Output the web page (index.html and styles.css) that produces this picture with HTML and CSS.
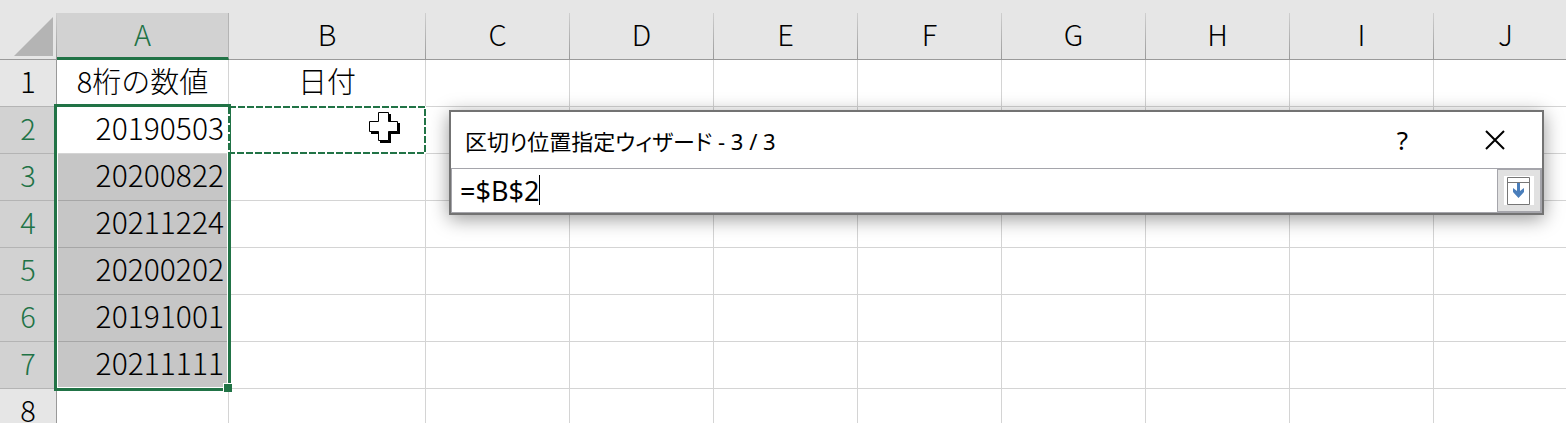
FILE: index.html
```html
<!DOCTYPE html>
<html lang="ja">
<head>
    <meta charset="UTF-8">
    <meta name="viewport" content="width=device-width, initial-scale=1.0">
    <title>区切り位置指定ウィザード</title>
    <link rel="stylesheet" href="styles.css">
</head>
<body>
    <div class="sheet">
        <table class="grid">
            <thead>
                <tr>
                    <th class="corner">
                        <svg class="corner-mark" width="39" height="39" viewBox="0 0 39 39"><path d="M39 0V39H0z" fill="#b4b4b4"/></svg>
                    </th>
                    <th class="col-a active" scope="col">A</th>
                    <th class="col-b" scope="col">B</th>
                    <th scope="col">C</th>
                    <th scope="col">D</th>
                    <th scope="col">E</th>
                    <th scope="col">F</th>
                    <th scope="col">G</th>
                    <th scope="col">H</th>
                    <th scope="col">I</th>
                    <th scope="col">J</th>
                </tr>
            </thead>
            <tbody>
                <tr>
                    <th scope="row">1</th>
                    <td class="center">8桁の数値</td>
                    <td class="center">日付</td>
                    <td></td><td></td><td></td><td></td><td></td><td></td><td></td><td></td>
                </tr>
                <tr>
                    <th class="active" scope="row">2</th>
                    <td class="num anchor">20190503
                        <div class="selection"><span class="handle"></span></div>
                    </td>
                    <td class="anchor">
                        <svg class="ants" width="198" height="48" viewBox="0 0 198 48" fill="none" stroke-width="2">
                            <path d="M1 1H197V47H1z" stroke="#fff"/>
                            <path d="M1 1H197V47H1z" stroke="#217346" stroke-dasharray="7 2"/>
                        </svg>
                        <svg class="cursor" width="32" height="32" viewBox="0 0 32 32">
                            <path d="M11 2h11v9h9v11h-9v9H11v-9H2V11h9z" fill="#000"/>
                            <path d="M9.500.5h10v9h9v10h-9v9h-10v-9h-9v-10h9z" fill="#fff" stroke="#000"/>
                        </svg>
                    </td>
                    <td></td><td></td><td></td><td></td><td></td><td></td><td></td><td></td>
                </tr>
                <tr>
                    <th class="active" scope="row">3</th>
                    <td class="num picked">20200822</td>
                    <td></td><td></td><td></td><td></td><td></td><td></td><td></td><td></td><td></td>
                </tr>
                <tr>
                    <th class="active" scope="row">4</th>
                    <td class="num picked">20211224</td>
                    <td></td><td></td><td></td><td></td><td></td><td></td><td></td><td></td><td></td>
                </tr>
                <tr>
                    <th class="active" scope="row">5</th>
                    <td class="num picked">20200202</td>
                    <td></td><td></td><td></td><td></td><td></td><td></td><td></td><td></td><td></td>
                </tr>
                <tr>
                    <th class="active" scope="row">6</th>
                    <td class="num picked">20191001</td>
                    <td></td><td></td><td></td><td></td><td></td><td></td><td></td><td></td><td></td>
                </tr>
                <tr>
                    <th class="active" scope="row">7</th>
                    <td class="num picked">20211111</td>
                    <td></td><td></td><td></td><td></td><td></td><td></td><td></td><td></td><td></td>
                </tr>
                <tr>
                    <th scope="row">8</th>
                    <td></td><td></td><td></td><td></td><td></td><td></td><td></td><td></td><td></td><td></td>
                </tr>
            </tbody>
        </table>

        <div class="dialog" role="dialog" aria-labelledby="title">
            <div class="titlebar">
                <label class="title" id="title" for="range">区切り位置指定ウィザード - 3 / 3</label>
                <button class="tool" type="button">?</button>
                <button class="tool" type="button" aria-label="閉じる">
                    <svg width="20" height="20" viewBox="0 0 20 20"><path d="M1 1L19 19M19 1L1 19" stroke="#000" stroke-width="2"/></svg>
                </button>
            </div>
            <div class="field">
                <input class="range" id="range" type="text" value="=$B$2" autocomplete="off">
                <span class="caret"></span>
                <button class="expand" type="button" aria-label="ダイアログを展開">
                    <svg width="30" height="29" viewBox="0 0 30 29">
                        <path d="M0 0H30V29H0z" fill="#fff"/>
                        <path d="M3.500 1.500H25.500V28.500H3.500zM3.500 6.500H25.500" fill="none" stroke="#767676"/>
                        <path d="M13 7h3v8l4-3v4l-5.500 6L9 16v-4l4 3z" fill="#4a7ebb"/>
                    </svg>
                </button>
            </div>
        </div>
    </div>
</body>
</html>
```
FILE: styles.css
```css
* {
    box-sizing: border-box;
    margin: 0;
    padding: 0;
}

body {
    background-color: #fff;
    color: #000;
    font-family: "Noto Sans CJK JP", sans-serif;
}

.sheet {
    position: relative;
    height: 100vh;
    overflow: hidden;
    padding-top: 13px;
    background: linear-gradient(#e6e6e6, #e6e6e6) top / 100% 13px no-repeat;
}

/* cells */
.grid {
    border-collapse: separate;
    border-spacing: 0;
    font-size: 29px;
    line-height: 38px;
}

.grid th,
.grid td {
    height: 47px;
    padding-bottom: 6px;
    border-right: 1px solid #d4d4d4;
    border-bottom: 1px solid #d4d4d4;
    font-weight: 300;
}

.grid th {
    background-color: #e6e6e6;
}

.grid thead th {
    min-width: 144px;
    border-right: 1px solid;
    border-image: linear-gradient(#d0d0d0, #999) 1;
    border-bottom: 1px solid #999;
}

.grid thead .corner {
    min-width: 57px;
    padding: 4px 3px 3px 0;
    border-right-color: #999;
    line-height: 0;
    text-align: right;
}

.grid thead .col-a {
    min-width: 172px;
}

.grid thead .col-b {
    min-width: 197px;
}

.grid tbody th {
    border-right-color: #999;
    border-bottom-color: #b4b4b4;
}

.grid .active {
    background-color: #d2d2d2;
    color: #217346;
}

.grid thead .active {
    padding-bottom: 4px;
    border-image: none;
    border-right-color: #b4b4b4;
    border-bottom: 3px solid #217346;
}

.center {
    text-align: center;
}

.grid .num {
    padding-right: 4px;
    font-size: 30px;
    text-align: right;
}

.grid .picked {
    background-color: #c6c6c6;
    border-bottom-color: #a6a6a6;
}

/* selection and marquee */
.anchor {
    position: relative;
}

.selection {
    position: absolute;
    top: -3px;
    left: -3px;
    width: 177px;
    height: 287px;
    border: 3px solid #217346;
    box-shadow: inset 0 0 0 1px #fff;
}

.handle {
    position: absolute;
    right: -4px;
    bottom: -4px;
    width: 9px;
    height: 9px;
    border-top: 1px solid #fff;
    border-left: 1px solid #fff;
    background-color: #217346;
}

.ants {
    position: absolute;
    top: -1px;
    left: -1px;
}

.cursor {
    position: absolute;
    top: 5px;
    right: 24px;
}

/* wizard dialog */
.dialog {
    position: absolute;
    top: 110px;
    left: 449px;
    right: 22px;
    border: 2px solid #737373;
    background-color: #fff;
    box-shadow: 0 4px 18px rgba(0, 0, 0, 0.4);
}

.titlebar {
    display: flex;
    align-items: center;
    height: 56px;
    padding-left: 14px;
}

.title {
    flex: 1;
    font-family: "Noto Sans", "Noto Sans CJK JP", sans-serif;
    font-size: 22px;
    font-feature-settings: "palt";
    white-space: nowrap;
}

.tool {
    display: flex;
    justify-content: center;
    align-items: center;
    width: 91px;
    height: 54px;
    border: none;
    background: none;
    color: #000;
    font-family: "Noto Sans", sans-serif;
    font-size: 26px;
}

.tool:last-child {
    width: 94px;
}

.field {
    display: flex;
    height: 45px;
    border: 1px solid #a5a5ab;
    position: relative;
}

.range {
    flex: 1;
    min-width: 0;
    padding-left: 8px;
    border: none;
    outline: none;
    color: #000;
    font-family: "Noto Sans", sans-serif;
    font-size: 27px;
}

.caret {
    position: absolute;
    top: 6px;
    left: 87px;
    width: 1px;
    height: 30px;
    background-color: #000;
}

.expand {
    display: flex;
    justify-content: center;
    align-items: center;
    width: 44px;
    border: 1px solid #a5a5ab;
    background-color: #e1e1e1;
}
```
